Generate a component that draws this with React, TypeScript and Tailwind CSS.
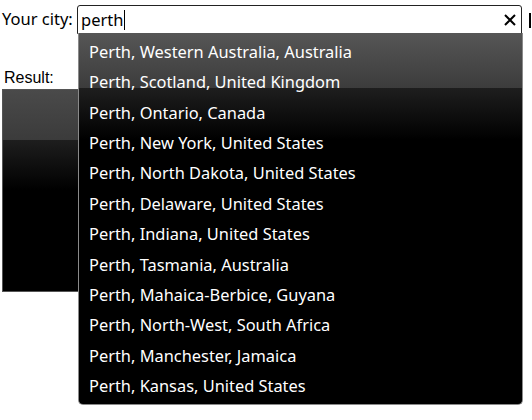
import React from "react";

const cities = [
  "Perth, Western Australia, Australia",
  "Perth, Scotland, United Kingdom",
  "Perth, Ontario, Canada",
  "Perth, New York, United States",
  "Perth, North Dakota, United States",
  "Perth, Delaware, United States",
  "Perth, Indiana, United States",
  "Perth, Tasmania, Australia",
  "Perth, Mahaica-Berbice, Guyana",
  "Perth, North-West, South Africa",
  "Perth, Manchester, Jamaica",
  "Perth, Kansas, United States",
];

const App = () => {
  return (
    <div className="relative w-[532px] h-[420px] bg-white overflow-hidden">
      {/* search row */}
      <div className="flex items-start pt-[5px]">
        <span className="pl-[2px] pt-[3px] w-[77px] text-[16.5px] leading-[22px] text-black font-['Noto_Sans',sans-serif]">
          Your city:
        </span>
        <div className="flex items-center w-[445px] h-[29px] border-[1.5px] border-[#222] rounded-t-[3px] bg-white">
          <span className="pl-[3px] text-[16.5px] leading-[22px] text-black font-['Noto_Sans',sans-serif]">
            perth
          </span>
          <span className="w-px h-[20px] bg-black ml-px" />
          <svg className="ml-auto mr-[5px]" width="12" height="12" viewBox="0 0 12 12">
            <path d="M1 1L11 11M11 1L1 11" stroke="#000" strokeWidth="2" />
          </svg>
        </div>
        <span className="ml-[7px] mt-[8px] w-[2px] h-[15px] bg-black" />
      </div>

      <div className="pl-[4px] pt-[34px] text-[16px] leading-[20px] text-black font-['Liberation_Sans',sans-serif]">
        Result:
      </div>
      <div className="ml-[2px] mt-[1px] w-[90px] h-[203px] border border-[#555] bg-[linear-gradient(to_bottom,#4a4a4a_0px,#3b3b3b_50px,#1e1e1e_50px,#000_100px)]" />

      {/* dropdown */}
      <div className="absolute left-[78px] top-[33px] w-[445px] h-[372px] rounded-b-[5px] border border-t-0 border-[#8a8a8a] bg-[linear-gradient(to_bottom,#565656_0px,#3c3c3c_55px,#1e1e1e_55px,#000_107px)] pt-[4px]">
        {cities.map((c) => (
          <div
            key={c}
            className="h-[30.4px] pl-[10px] flex items-center text-[16.4px] text-white font-['Noto_Sans',sans-serif]"
          >
            {c}
          </div>
        ))}
      </div>
    </div>
  );
};

export default App;
